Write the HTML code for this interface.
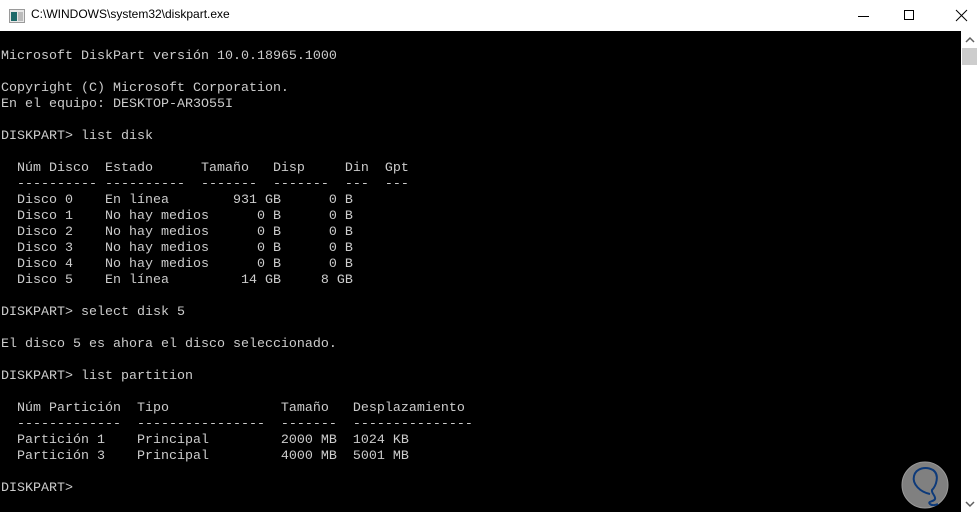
<!DOCTYPE html>
<html><head><meta charset="utf-8"><style>
html,body{margin:0;padding:0;width:979px;height:512px;overflow:hidden;background:#fff}
#title{position:absolute;left:0;top:0;width:979px;height:31px;background:#fff;}
#title .t{position:absolute;left:31px;top:7px;font:12px "Liberation Sans",sans-serif;color:#000}
#con{position:absolute;left:0;top:31px;width:961px;height:481px;background:#000}
pre{position:absolute;left:1px;top:49px;margin:0;font:13.33px/16px "Liberation Mono",monospace;color:#cccccc}
#sb{position:absolute;left:961px;top:31px;width:17px;height:481px;background:#fff}
#thumb{position:absolute;left:962px;top:48px;width:15px;height:17px;background:#cdcdcd}
</style></head><body>
<div id="title">
<svg style="position:absolute;left:9px;top:9px" width="16" height="14"><rect x="0.5" y="0.5" width="15" height="13" fill="#e8e8e8" stroke="#9a9a9a"/><rect x="2" y="3" width="6" height="9" fill="#1e6a6a"/><rect x="9" y="3" width="5" height="9" fill="#bbb"/></svg>
<div class="t">C:\WINDOWS\system32\diskpart.exe</div>
<svg style="position:absolute;left:850px;top:8px" width="130" height="16">
<line x1="8" y1="8.5" x2="19" y2="8.5" stroke="#000"/>
<rect x="54.5" y="2.5" width="9" height="9" fill="none" stroke="#000"/>
<line x1="106" y1="2" x2="117" y2="13" stroke="#000"/><line x1="117" y1="2" x2="106" y2="13" stroke="#000"/>
</svg>
</div>
<div id="con"></div>
<div id="sb"></div>
<div id="thumb"></div>
<svg style="position:absolute;left:964px;top:36px" width="12" height="8"><polyline points="2,6 6,2 10,6" fill="none" stroke="#606060" stroke-width="1.5"/></svg>
<svg style="position:absolute;left:964px;top:500px" width="12" height="8"><polyline points="2,2 6,6 10,2" fill="none" stroke="#606060" stroke-width="1.5"/></svg>
<pre>Microsoft DiskPart versión 10.0.18965.1000

Copyright (C) Microsoft Corporation.
En el equipo: DESKTOP-AR3O55I

DISKPART&gt; list disk

  Núm Disco  Estado      Tamaño   Disp     Din  Gpt
  ---------- ----------  -------  -------  ---  ---
  Disco 0    En línea        931 GB      0 B
  Disco 1    No hay medios      0 B      0 B
  Disco 2    No hay medios      0 B      0 B
  Disco 3    No hay medios      0 B      0 B
  Disco 4    No hay medios      0 B      0 B
  Disco 5    En línea         14 GB     8 GB

DISKPART&gt; select disk 5

El disco 5 es ahora el disco seleccionado.

DISKPART&gt; list partition

  Núm Partición  Tipo              Tamaño   Desplazamiento
  -------------  ----------------  -------  ---------------
  Partición 1    Principal         2000 MB  1024 KB
  Partición 3    Principal         4000 MB  5001 MB

DISKPART&gt;</pre>
<svg style="position:absolute;left:900px;top:460px" width="60" height="52">
<circle cx="25" cy="25" r="23" fill="#808080" stroke="#9a9a9a" stroke-width="1"/>
<path d="M30 34 C20 32 12 24 14 16 C16 8 26 6 33 10 C40 15 36 26 32 30 C31 33 36 36 35 39 C34 42 27 41 30 44 C32 46 36 45 38 44" fill="none" stroke="#0d3a7a" stroke-width="2"/>
</svg>
</body></html>
